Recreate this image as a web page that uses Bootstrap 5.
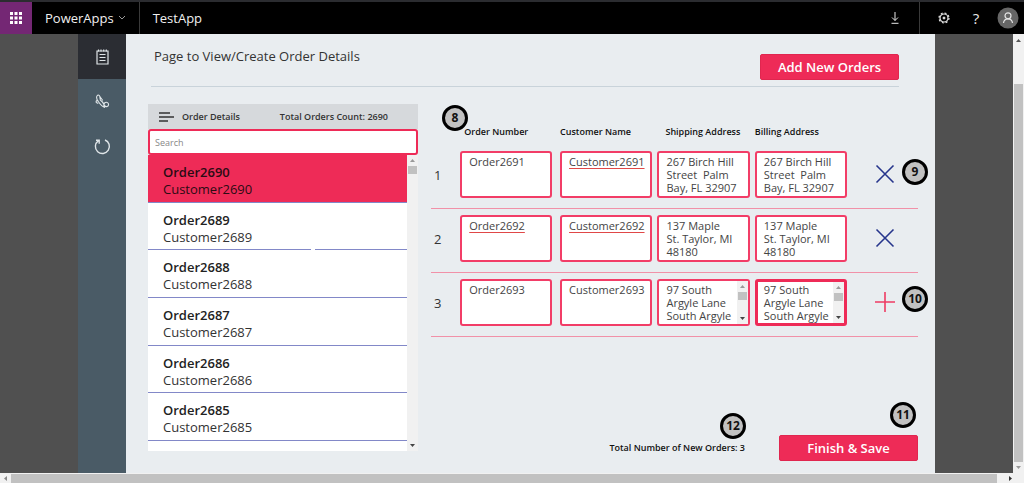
<!DOCTYPE html>
<html lang="en">
<head>
<meta charset="utf-8">
<meta name="viewport" content="width=device-width, initial-scale=1">
<title>TestApp - PowerApps</title>
<link rel="stylesheet" href="https://cdn.jsdelivr.net/npm/bootstrap@5.3.0/dist/css/bootstrap.min.css">
<style>
  :root { --pink: #ee2b57; --ink: #333; --paper: #e9edf0; }
  body { font-family: "Open Sans", "Noto Sans", sans-serif; font-size: 12px; line-height: 16px; color: var(--ink); background: #505050; }
  button { font-family: inherit; }
  svg { display: block; }

  /* top bar */
  .topbar { height: 34px; background: #000; border-top: 2px solid #2b2c30; color: #e8e8e8; }
  .waffle { width: 32px; background: #742774; }
  .brand { font-size: 13px; line-height: 18px; color: #f0f0f0; text-decoration: none; padding: 0 13px; }
  .bar-btn { width: 32px; background: none; border: 0; padding: 0; color: #e8e8e8; font-size: 15px; }
  .rule-v { width: 1px; background: #3a3a3a; }

  /* stage */
  .stage { padding: 0 78px; }
  .rail { width: 48px; background: #4a5b66; }
  .rail button { height: 45px; border: 0; background: none; color: #dfe5e8; padding: 0; }
  .rail .current { background: #2b2d33; }
  .canvas { background: var(--paper); padding: 20px 17px 12px 22px; }
  .page-head { margin: 0 19px 17px 3px; padding: 0 0 6px 3px; border-bottom: 1px solid #c9d3da; }
  .page-head h1 { font-size: 13px; line-height: 18px; margin: -7px 0 0; }
  .btn-pink { background: var(--pink); border: 1px solid #e0264f; color: #fff; font-weight: 600; font-size: 13px; line-height: 18px; border-radius: 2px; padding: 3px 0; width: 139px; }
  .btn-pink:hover { background: #d9244c; color: #fff; }

  /* gallery of orders */
  .gallery { width: 270px; margin-bottom: 10px; }
  .gallery-head { height: 25px; background: #d6d9dc; font-size: 9px; font-weight: 600; color: #333; padding: 0 30px 0 11px; }
  .search { height: 26px; border: 2px solid var(--pink); border-radius: 3px; padding: 0 5px; font-size: 9px; background: #fff; }
  .search::placeholder { color: #888; }
  .orders { background: #fff; }
  .order { position: relative; display: flex; flex-direction: column; justify-content: center; padding: 5px 15px 0; font-size: 13px; line-height: 17px; color: var(--ink); text-decoration: none; border-bottom: 1px solid #8288c8; flex: 1 1 0; }
  .order strong { font-weight: 600; color: #222; }
  .order.picked, .order.picked strong { background: var(--pink); color: #2b0b14; }
  .order.split::after { content: ""; position: absolute; left: 63%; bottom: -1px; width: 4px; height: 1px; background: #fff; }
  .stub { height: 10px; }

  /* scrollbars */
  .bar { background: #f1f1f1; display: flex; align-items: center; color: #555; }
  .bar.down { flex-direction: column; width: 11px; }
  .bar i { background: #c1c1c1; }
  .bar.down i { width: 9px; }
  .arrow { width: 11px; height: 11px; flex: none; }
  .bar.wide { height: 10px; }
  .bar.wide i { height: 9px; }

  /* order form */
  .form-side { padding-left: 13px; }
  .lines { table-layout: fixed; width: 100%; border-collapse: separate; border-spacing: 0; }
  .lines thead th { height: 41px; vertical-align: bottom; padding: 0 0 5px; font-size: 9px; font-weight: 600; color: #111; white-space: nowrap; }
  .lines tbody tr { height: 64px; }
  .lines tbody tr > * { border-bottom: 1px solid #f191a8; }
  .lines td { padding: 6px 5px 0 0; vertical-align: top; }
  .lines .num { padding: 22px 0 0 3px; font-size: 13px; font-weight: 400; vertical-align: top; }
  .entry { display: block; width: 100%; height: 47px; border: 2px solid #f23d67; border-radius: 3px; padding: 2px 0 0 7px; font-size: 11px; line-height: 13px; color: #444; background: #fff; resize: none; overflow: hidden; outline: 0; }
  .entry.active { border: 3px solid var(--pink); padding: 1px 0 0 6px; }
  .entry.typo { text-decoration: underline #e04848; text-underline-offset: 2px; }
  .entry-bar { top: 2px; right: 2px; bottom: 2px; }
  .active + .entry-bar { top: 3px; right: 3px; bottom: 3px; }
  .act { background: none; border: 0; padding: 0; margin: 13px 0 0 23px; display: block; }
  .callout { position: absolute; width: 26px; height: 26px; border: 3px solid #000; border-radius: 50%; background: #c1c1c1; color: #111; font-size: 12px; font-weight: 700; line-height: 20px; text-align: center; }
  .total { font-size: 9px; font-weight: 600; color: #111; margin-right: 34px; }
</style>
</head>
<body class="d-flex flex-column min-vh-100">

<header class="topbar d-flex flex-shrink-0">
  <button class="waffle border-0 p-0 d-flex align-items-center justify-content-center" aria-label="App launcher">
    <svg width="12" height="12" viewBox="0 0 12 12" fill="#fff"><path d="M0 0h3v3H0zM4.500 0h3v3h-3zM9 0h3v3H9zM0 4.500h3v3H0zM4.500 4.500h3v3h-3zM9 4.500h3v3H9zM0 9h3v3H0zM4.500 9h3v3h-3zM9 9h3v3H9z"/></svg>
  </button>
  <a class="brand d-flex align-items-center" href="#"><span class="me-1">PowerApps</span>
    <svg width="8" height="6" viewBox="0 0 8 6" fill="none" stroke="#999"><path d="M1 1l3 3 3-3"/></svg></a>
  <span class="rule-v"></span>
  <a class="brand d-flex align-items-center" href="#">TestApp</a>
  <button class="bar-btn ms-auto me-2 d-flex align-items-center justify-content-center" aria-label="Download">
    <svg width="8" height="12" viewBox="0 0 8 12" fill="none" stroke="currentColor"><path d="M4 0v8.500M1 5.500l3 3 3-3M.5 11.300h7"/></svg>
  </button>
  <span class="rule-v"></span>
  <button class="bar-btn ms-2 d-flex align-items-center justify-content-center" aria-label="Settings">
    <svg width="12" height="12" viewBox="0 0 12 12" fill="none" stroke="currentColor"><circle cx="6" cy="6" r="4" stroke-width="1.200"/><circle cx="6" cy="6" r="5" stroke-width="1.200" stroke-dasharray="1.960 1.960"/><circle cx="6" cy="6" r="1" fill="currentColor"/></svg>
  </button>
  <button class="bar-btn" aria-label="Help">?</button>
  <button class="bar-btn d-flex align-items-center justify-content-center" aria-label="Account">
    <svg width="22" height="22" viewBox="0 0 22 22"><circle cx="11" cy="11" r="10.500" fill="#666"/><g fill="none" stroke="#e4e4e4" stroke-width="1.200"><circle cx="11" cy="8.800" r="3"/><path d="M6.500 16c.3-2.700 2-4.200 4.500-4.200s4.200 1.500 4.500 4.200"/></g></svg>
  </button>
</header>

<div class="d-flex flex-grow-1">
  <div class="stage d-flex flex-grow-1">
    <nav class="rail d-flex flex-column flex-shrink-0" aria-label="Sections">
      <button class="current d-flex align-items-center justify-content-center" aria-label="Orders">
        <svg width="13" height="16" viewBox="0 0 13 16" fill="none" stroke="currentColor" stroke-width="1.200"><path d="M1 2h11v13H1zM3.500 5.500h6M3.500 8.500h6M3.500 11.500h6"/><path d="M2.500 .5v2M5 .5v2M7.700 .5v2M10.300 .5v2"/></svg>
      </button>
      <button class="d-flex align-items-center justify-content-center" aria-label="Support">
        <svg width="15" height="15" viewBox="0 0 15 15" fill="none" stroke="currentColor" stroke-width="1.100"><path d="M2.300 1.500c1-1 2.300-.3 2.500 1l.5 3.500c1.500 1 3 3 4 5 1.200 2.500 4.300 2 4.300-.5 0-2-2.600-3-4-1.500-1.200 1.300-1 3.500.5 4.500M2.300 1.500C1 3 1.500 5 3.300 7.500c2 3 4.300 5.300 6.800 6M1.300 8.500c-.6-1.500.7-2.500 2-1.800M1.300 8.500l2 1M4.800 2.500l3 4"/></svg>
      </button>
      <button class="d-flex align-items-center justify-content-center" aria-label="Refresh">
        <svg width="17" height="17" viewBox="0 0 17 17" fill="none" stroke="currentColor" stroke-width="1.400"><path d="M11 2a7 7 0 1 1-6.800.9M2 2.200h3.200v3.500"/></svg>
      </button>
    </nav>

    <main class="canvas d-flex flex-column flex-grow-1">
      <div class="page-head d-flex align-items-start justify-content-between">
        <h1 class="fw-normal">Page to View/Create Order Details</h1>
        <button class="btn btn-pink">Add New Orders</button>
      </div>

      <div class="d-flex flex-grow-1">
        <section class="gallery d-flex flex-column flex-shrink-0" aria-label="Order Details">
          <div class="gallery-head d-flex align-items-center">
            <svg class="me-2" width="15" height="10" viewBox="0 0 15 10" stroke="#333" stroke-width="1.400"><path d="M0 1h11M0 5h15M0 9h9"/></svg>
            <span>Order Details</span><span class="ms-auto">Total Orders Count: 2690</span>
          </div>
          <input class="search w-100" type="search" placeholder="Search" aria-label="Search orders">
          <div class="orders d-flex flex-grow-1">
            <div class="d-flex flex-column flex-grow-1">
              <a class="order picked" href="#"><strong>Order2690</strong><span>Customer2690</span></a>
              <a class="order split" href="#"><strong>Order2689</strong><span>Customer2689</span></a>
              <a class="order" href="#"><strong>Order2688</strong><span>Customer2688</span></a>
              <a class="order" href="#"><strong>Order2687</strong><span>Customer2687</span></a>
              <a class="order" href="#"><strong>Order2686</strong><span>Customer2686</span></a>
              <a class="order" href="#"><strong>Order2685</strong><span>Customer2685</span></a>
              <div class="stub"></div>
            </div>
            <div class="bar down" aria-hidden="true">
              <svg class="arrow" viewBox="0 0 11 11" fill="#999"><path d="M3 7l2.500-3L8 7z"/></svg>
              <i class="pt-2"></i>
              <svg class="arrow mt-auto" viewBox="0 0 11 11" fill="#444"><path d="M3 4l2.500 3L8 4z"/></svg>
            </div>
          </div>
        </section>

        <section class="form-side d-flex flex-column flex-grow-1 position-relative" aria-label="New orders">
          <table class="lines">
            <colgroup><col style="width:6%"><col style="width:20.500%"><col style="width:20%"><col style="width:20%"><col style="width:20%"><col></colgroup>
            <thead>
              <tr><th></th><th class="ps-1">Order Number</th><th>Customer Name</th><th class="ps-2">Shipping Address</th><th>Billing Address</th><th></th></tr>
            </thead>
            <tbody>
              <tr>
                <th class="num" scope="row">1</th>
                <td class="pe-2"><textarea class="entry" aria-label="Order number 1">Order2691</textarea></td>
                <td><textarea class="entry typo" spellcheck="false" aria-label="Customer name 1">Customer2691</textarea></td>
                <td><textarea class="entry" aria-label="Shipping address 1">267 Birch Hill
Street  Palm
Bay, FL 32907</textarea></td>
                <td><textarea class="entry" aria-label="Billing address 1">267 Birch Hill
Street  Palm
Bay, FL 32907</textarea></td>
                <td><button class="act" aria-label="Remove order 1"><svg width="20" height="20" viewBox="0 0 20 20" stroke="#26358c" stroke-width="1.600"><path d="M1.500 1.500l17 17M18.500 1.500l-17 17"/></svg></button></td>
              </tr>
              <tr>
                <th class="num" scope="row">2</th>
                <td class="pe-2"><textarea class="entry typo" spellcheck="false" aria-label="Order number 2">Order2692</textarea></td>
                <td><textarea class="entry typo" spellcheck="false" aria-label="Customer name 2">Customer2692</textarea></td>
                <td><textarea class="entry" aria-label="Shipping address 2">137 Maple
St. Taylor, MI
48180</textarea></td>
                <td><textarea class="entry" aria-label="Billing address 2">137 Maple
St. Taylor, MI
48180</textarea></td>
                <td><button class="act" aria-label="Remove order 2"><svg width="20" height="20" viewBox="0 0 20 20" stroke="#26358c" stroke-width="1.600"><path d="M1.500 1.500l17 17M18.500 1.500l-17 17"/></svg></button></td>
              </tr>
              <tr>
                <th class="num" scope="row">3</th>
                <td class="pe-2"><textarea class="entry" aria-label="Order number 3">Order2693</textarea></td>
                <td><textarea class="entry" aria-label="Customer name 3">Customer2693</textarea></td>
                <td><div class="position-relative"><textarea class="entry" aria-label="Shipping address 3">97 South
Argyle Lane
South Argyle
Lane, Stony</textarea>
                  <div class="bar down entry-bar position-absolute" aria-hidden="true"><svg class="arrow" viewBox="0 0 11 11" fill="#999"><path d="M3 7l2.500-3L8 7z"/></svg><i class="pt-2"></i><svg class="arrow mt-auto" viewBox="0 0 11 11" fill="#444"><path d="M3 4l2.500 3L8 4z"/></svg></div></div></td>
                <td><div class="position-relative"><textarea class="entry active" aria-label="Billing address 3">97 South
Argyle Lane
South Argyle</textarea>
                  <div class="bar down entry-bar position-absolute" aria-hidden="true"><svg class="arrow" viewBox="0 0 11 11" fill="#999"><path d="M3 7l2.500-3L8 7z"/></svg><i class="pt-2"></i><svg class="arrow mt-auto" viewBox="0 0 11 11" fill="#444"><path d="M3 4l2.500 3L8 4z"/></svg></div></div></td>
                <td><button class="act" aria-label="Add order"><svg width="20" height="20" viewBox="0 0 20 20" stroke="#ee3b63" stroke-width="1.600"><path d="M10 0v20M0 10h20"/></svg></button></td>
              </tr>
            </tbody>
          </table>
          <span class="callout" style="left:24px;top:1px">8</span>
          <span class="callout" style="right:-10px;top:55px">9</span>
          <span class="callout" style="right:-10px;top:182px">10</span>
          <div class="d-flex align-items-center justify-content-end mt-auto">
            <div class="total position-relative">Total Number of New Orders: 3<span class="callout" style="right:-1px;bottom:17px">12</span></div>
            <div class="position-relative"><button class="btn btn-pink">Finish &amp; Save</button><span class="callout" style="right:2px;bottom:33px">11</span></div>
          </div>
        </section>
      </div>
    </main>
  </div>
  <div class="bar down" aria-hidden="true">
    <svg class="arrow" viewBox="0 0 11 11" fill="#555"><path d="M3 8l2.500-3L8 8z"/></svg>
    <i class="mt-auto" style="height:86%"></i>
    <svg class="arrow" viewBox="0 0 11 11" fill="#999"><path d="M3 4l2.500 3L8 4z"/></svg>
  </div>
</div>
<div class="bar wide flex-shrink-0" aria-hidden="true">
  <svg class="arrow" viewBox="0 0 11 11" fill="#888"><path d="M7 3L4 5.500 7 8z"/></svg>
  <i class="flex-grow-1"></i>
  <svg class="arrow me-2 ms-2" viewBox="0 0 11 11" fill="#333"><path d="M4 3l3 2.500L4 8z"/></svg>
</div>
<script src="https://cdn.jsdelivr.net/npm/bootstrap@5.3.0/dist/js/bootstrap.bundle.min.js"></script>
</body>
</html>
